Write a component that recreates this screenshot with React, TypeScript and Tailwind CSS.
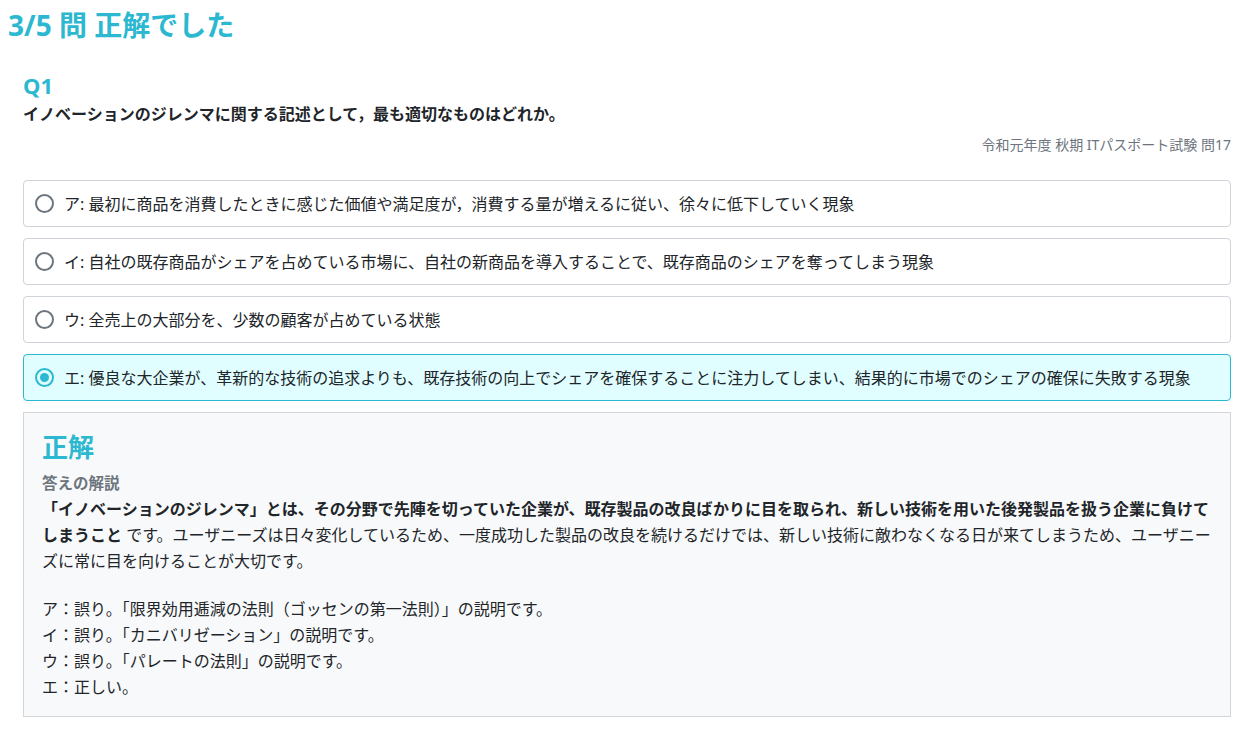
const font = { fontFamily: '"Segoe UI", "Noto Sans", "Noto Sans CJK JP", sans-serif' };

const options = [
  { key: "ア", text: "最初に商品を消費したときに感じた価値や満足度が，消費する量が増えるに従い、徐々に低下していく現象" },
  { key: "イ", text: "自社の既存商品がシェアを占めている市場に、自社の新商品を導入することで、既存商品のシェアを奪ってしまう現象" },
  { key: "ウ", text: "全売上の大部分を、少数の顧客が占めている状態" },
  { key: "エ", text: "優良な大企業が、革新的な技術の追求よりも、既存技術の向上でシェアを確保することに注力してしまい、結果的に市場でのシェアの確保に失敗する現象" },
];

function Radio({ checked }: { checked: boolean }) {
  if (checked) {
    return (
      <span className="flex h-[19px] w-[19px] shrink-0 items-center justify-center rounded-full border-[2px] border-[#2bb8d0]">
        <span className="h-[9px] w-[9px] rounded-full bg-[#2bb8d0]" />
      </span>
    );
  }
  return <span className="h-[19px] w-[19px] shrink-0 rounded-full border-[2px] border-[#6c757d]" />;
}

export default function App() {
  const selected = "エ";
  return (
    <div className="min-h-screen bg-white px-2 pt-[5px] text-[#212529]" style={font}>
      <h1 className="text-[28px] font-bold leading-[40px] text-[#2bb8d0]">3/5 問 正解でした</h1>

      <div className="pl-[15px] pr-[18px] pt-[26px]">
        <h2 className="text-[22px] font-bold leading-[28px] text-[#2bb8d0]">Q1</h2>
        <p className="mt-[3px] text-[16px] font-bold leading-[24px]">
          イノベーションのジレンマに関する記述として，最も適切なものはどれか。
        </p>
        <p className="mt-[9px] text-right text-[14px] leading-[20px] text-[#6c757d]">
          令和元年度 秋期 ITパスポート試験 問17
        </p>

        <div className="mt-[25px] flex flex-col gap-[11px]">
          {options.map((o) => {
            const on = o.key === selected;
            return (
              <label
                key={o.key}
                className={
                  on
                    ? "flex h-[47px] items-center gap-[10px] rounded-[4px] border border-[#2bb8d0] bg-[#e0feff] px-[11px]"
                    : "flex h-[47px] items-center gap-[10px] rounded-[4px] border border-[#ced4da] bg-white px-[11px]"
                }
              >
                <Radio checked={on} />
                <span className="text-[16px] leading-[22px]">
                  {o.key}: {o.text}
                </span>
              </label>
            );
          })}
        </div>

        <div className="mt-[11px] border border-[#d3d5d8] bg-[#f8f9fa] px-[18px] pb-[16px] pt-[16px]">
          <h3 className="text-[26px] font-bold leading-[36px] text-[#2bb8d0]">正解</h3>
          <p className="mt-[7px] text-[15.5px] font-bold leading-[22px] text-[#6c757d]">答えの解説</p>
          <p className="mt-[2px] text-[16px] leading-[26px]">
            <strong>
              「イノベーションのジレンマ」とは、その分野で先陣を切っていた企業が、既存製品の改良ばかりに目を取られ、新しい技術を用いた後発製品を扱う企業に負けてしまうこと
            </strong>{" "}
            です。ユーザニーズは日々変化しているため、一度成功した製品の改良を続けるだけでは、新しい技術に敵わなくなる日が来てしまうため、ユーザニーズに常に目を向けることが大切です。
          </p>
          <p className="mt-[22px] text-[16px] leading-[26px]">
            ア：誤り。「限界効用逓減の法則（ゴッセンの第一法則）」の説明です。
            <br />
            イ：誤り。「カニバリゼーション」の説明です。
            <br />
            ウ：誤り。「パレートの法則」の説明です。
            <br />
            エ：正しい。
          </p>
        </div>
      </div>
    </div>
  );
}
